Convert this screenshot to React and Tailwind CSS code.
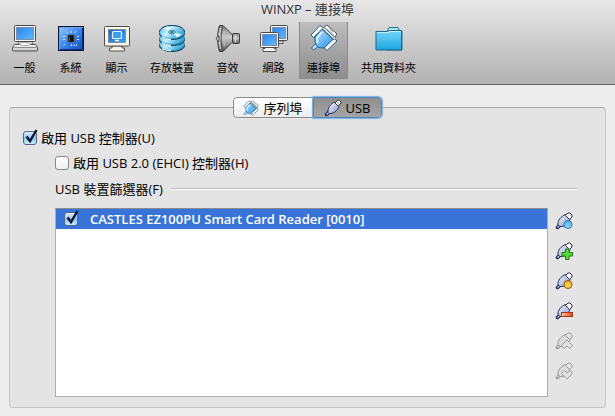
import React, { useState } from "react";

const Monitor = ({ x = 0, y = 0, w = 21, h = 17 }) => (
  <g transform={`translate(${x} ${y})`}>
    <rect x="0.5" y="0.5" width={w - 1} height={h - 1} rx="1" fill="#f4f4f0" stroke="#4c4c4c" />
    <rect x="2.5" y="2.5" width={w - 5} height={h - 5} fill="url(#screen)" stroke="#7d8fa8" />
  </g>
);

const GeneralIcon = () => (
  <svg width="28" height="28" viewBox="0 0 28 28">
    <path d="M8 17h13l1 4H7z" fill="#d8d8d4" stroke="#777" />
    <Monitor x={3} y={1} w={22} h={17} />
    <path d="M3.500 20.500h21l2 3v2.500q0 1-1 1h-23q-1 0-1-1v-2.500z" fill="url(#grayV)" stroke="#4f4f4f" />
    <ellipse cx="14" cy="20" rx="6" ry="1.500" fill="#fff" stroke="#888" strokeWidth="0.700" />
    <path d="M2.500 23.500h23" stroke="#8a8a8a" />
  </svg>
);

const SystemIcon = () => (
  <svg width="28" height="28" viewBox="0 0 28 28">
    <rect x="1.500" y="2.500" width="25" height="24" fill="#6f9fe4" stroke="#10183a" />
    <rect x="3" y="4" width="22" height="21" fill="url(#board)" />
    <path d="M3 25.500h22.500V4" fill="none" stroke="#0b2c82" />
    <rect x="11" y="11" width="6" height="7" fill="#101010" stroke="#5b5346" strokeWidth="0.700" />
    <path d="M14 7v2M9.500 7.500l1.500 1.500M19.500 7l-2 2M6 12.500h2M6 15.500h2M7 21.500l1.500-1.500M20 12.500h2M20 15.500h2" stroke="#d9e9ff" />
    <path d="M14.500 20.500v1.500M17 20.500v1.500M19.500 20.500v1.500" stroke="#fff" />
    <path d="M12.500 13v4" stroke="#565656" />
  </svg>
);

const DisplayIcon = () => (
  <svg width="28" height="28" viewBox="0 0 28 28">
    <path d="M9 22h10v2h2.500v3h-15v-3H9z" fill="#f7f4e7" stroke="#555248" />
    <rect x="1.500" y="2.500" width="25" height="19.500" rx="1" fill="#f9f6e9" stroke="#4f4d45" />
    <rect x="5.500" y="5.500" width="17" height="13" fill="url(#screenDeep)" stroke="#778" strokeWidth="0.700" />
    <rect x="9.500" y="7.500" width="9" height="7" rx="1" fill="#3c9cf4" stroke="#e8f5ff" strokeWidth="1.200" />
    <path d="M12 16.500h4" stroke="#fff" strokeWidth="1.500" />
  </svg>
);

const StorageIcon = () => (
  <svg width="28" height="28" viewBox="0 0 28 28">
    {[20, 14, 8].map((cy) => (
      <g key={cy}>
        <path d={`M1.500 ${cy}v1.500c0 8 25 8 25 0V${cy}z`} fill="#157fb3" stroke="#174357" />
        <ellipse cx="14" cy={cy} rx="12.500" ry="6.500" fill="url(#disc)" stroke="#3a8db3" strokeWidth="0.700" />
      </g>
    ))}
    <path d="M1.500 8c0-8.700 25-8.700 25 0" fill="none" stroke="#174357" />
    <path d="M14 8L5 4.500 10 2zM14 8l10 2.500-5 3z" fill="#f1fcff" opacity="0.850" />
    <ellipse cx="14" cy="8" rx="3.500" ry="1.800" fill="#8bc7df" stroke="#277295" strokeWidth="0.700" />
    <ellipse cx="14" cy="8" rx="1.500" ry="0.800" fill="#16445c" />
    <path d="M4 18.500c2 2 6 3 9 3M4 24.500c2 1.500 6 2 9 2M4 12.500c2 2 6 3 9 3" stroke="#d9f8ff" strokeWidth="1.500" fill="none" />
  </svg>
);

const AudioIcon = () => (
  <svg width="28" height="28" viewBox="0 0 28 28">
    <rect x="18.500" y="9.500" width="7" height="10" rx="1" fill="url(#metal)" stroke="#3b3b3b" />
    <path d="M5.500 1.500h3.500L18.500 11v7L9 27.500H5.500C3 21 3 8 5.500 1.500z" fill="url(#metal)" stroke="#3b3b3b" />
    <path d="M9 2C6.500 9 6.500 20 9 27" stroke="#4b4b4b" fill="none" />
    <path d="M6.500 4c-1.500 6-1.500 15 0 21" stroke="#d5d5d5" fill="none" />
    <path d="M10.500 7c-.8 5-.8 10 0 15" stroke="#c2c2c2" fill="none" />
    <path d="M5 12c-3.500.5-3.500 5 0 5.500z" fill="#d0d0d0" stroke="#444" />
    <path d="M21.500 10.500v8" stroke="#ddd" />
  </svg>
);

const NetworkIcon = () => (
  <svg width="30" height="28" viewBox="0 0 30 28">
    <path d="M15 17h9v2.500h-9z" fill="#eee" stroke="#555" />
    <Monitor x={11} y={1} w={18} h={16} />
    <path d="M6 23h9v1.500h2v3H4v-3h2z" fill="#f2f2ee" stroke="#555" />
    <Monitor x={1} y={8} w={19} h={16} />
  </svg>
);

const PortIcon = ({ size = 28 }) => (
  <svg width={size} height={size} viewBox="0 0 28 28">
    <path d="M13 4l4-3 10 9-3 4z" fill="#f7f7f7" stroke="#555" />
    <path d="M17 5l7 6M20 5l3 3" stroke="#aaa" />
    <path d="M6 19l-4.500 5 2 2L9 22z" fill="#b9e1fa" stroke="#29638f" />
    <path d="M12 5l12 11-9 8c-3 0-6 0-8-2s-2-5-2-9z" fill="url(#port)" stroke="#195b91" />
    <path d="M12 8l-5 6c0 2 0 4 1 5" stroke="#dff5ff" strokeWidth="1.800" fill="none" />
    <path d="M10 1.500L13.500 4 3.500 13.500 1 11z" fill="#f0f8fd" stroke="#345d7d" />
    <path d="M24 14.500l3 2.500-10 9.500-3-2.500z" fill="#f0f8fd" stroke="#345d7d" />
    <path d="M13 4l12 11" stroke="#345d7d" strokeWidth="3" />
    <path d="M13 4l12 11" stroke="#f4fbff" strokeWidth="1.400" />
  </svg>
);

const FolderIcon = () => (
  <svg width="28" height="28" viewBox="0 0 28 28">
    <path d="M12 8l2-4.500h9l1.500 3.500H27v19H12z" fill="#a9e4fa" stroke="#28718d" />
    <path d="M1 7.500h11.500l2-1h12V26H1z" fill="url(#folder)" stroke="#236783" />
    <path d="M2 8.500h11l2-1h10.500" fill="none" stroke="#b9f0ff" />
  </svg>
);

const UsbPlugIcon = () => (
  <svg width="18" height="18" viewBox="0 0 18 18">
    <path d="M2.500 15.500l3-3" stroke="#252d55" strokeWidth="3.500" strokeLinecap="round" />
    <path d="M2.500 15.500l3-3" stroke="#b9c8f0" strokeWidth="1.300" />
    <path d="M4 13.500C3.500 9 6.500 5 10.500 3L15 7.500C13.500 11.500 9.500 15 5 14.500z" fill="url(#plug)" stroke="#252d55" />
    <path d="M11 4l3-3h1l2 2v1l-3 3z" fill="#fff" stroke="#333" />
    <path d="M13.500 3.500l1 1" stroke="#555" />
  </svg>
);

// badge is the small mark over the plug on the filter buttons
const FilterIcon = ({ badge, muted }) => {
  const line = muted ? "#999" : "#202b50";
  return (
    <svg width="18" height="18" viewBox="0 0 18 18">
      <path d="M2.500 15.500l3-3" stroke={line} strokeWidth="3.500" strokeLinecap="round" />
      <path d="M2.500 15.500l3-3" stroke={muted ? "#ddd" : "#c6d5ff"} strokeWidth="1.300" />
      <path
        d="M3 13C2.500 8 6 4.500 10.500 2.500L15 7.500C13.500 11.500 10 15 5 14.500z"
        fill={muted ? "#dcdcdc" : "url(#plug)"}
        stroke={line}
      />
      <path d="M10.500 3.500L13 1h2L17 3v2l-2.500 2.500z" fill={muted ? "#e4e4e4" : "#fff"} stroke={line} />
      {badge === "empty" && <circle cx="13" cy="12.500" r="4" fill="url(#badgeBlue)" stroke="#2777af" />}
      {badge === "add" && (
        <path d="M10.500 7h3.500v3.500h3.500v3.500H14v3.500h-3.500V14H7v-3.500h3.500z" fill="#55dd37" stroke="#207b17" />
      )}
      {badge === "edit" && <circle cx="13" cy="12.500" r="4" fill="url(#badgeGold)" stroke="#8c5306" />}
      {badge === "remove" && (
        <rect x="6.500" y="10.500" width="11" height="4" fill="url(#badgeRed)" stroke="#a63516" />
      )}
      {badge === "up" && (
        <path d="M12 8l5.500 5.500-2.500 3-3-2.500-3 2.500-2.500-3z" fill="#e3e3e3" stroke="#999" />
      )}
      {badge === "down" && (
        <path d="M12 17l5.500-5.500-2.500-3-3 2.500-3-2.500-2.500 3z" fill="#e3e3e3" stroke="#999" />
      )}
    </svg>
  );
};

const Gradients = () => (
  <svg className="absolute h-0 w-0" aria-hidden="true">
    <defs>
      <linearGradient id="screen" x1="0" y1="0" x2="1" y2="1">
        <stop offset="0" stopColor="#2586f0" />
        <stop offset="1" stopColor="#62b9ff" />
      </linearGradient>
      <linearGradient id="screenDeep" x1="0" y1="0" x2="1" y2="1">
        <stop offset="0" stopColor="#1768c6" />
        <stop offset="1" stopColor="#38a4ff" />
      </linearGradient>
      <linearGradient id="board" x1="0" y1="0" x2="1" y2="1">
        <stop offset="0" stopColor="#8cc3fd" />
        <stop offset="0.500" stopColor="#3c87e8" />
        <stop offset="1" stopColor="#1450c0" />
      </linearGradient>
      <linearGradient id="grayV" x1="0" y1="0" x2="0" y2="1">
        <stop offset="0" stopColor="#fff" />
        <stop offset="1" stopColor="#c4c4c4" />
      </linearGradient>
      <linearGradient id="disc" x1="0" y1="0" x2="1" y2="0.400">
        <stop offset="0" stopColor="#4ab5dc" />
        <stop offset="0.450" stopColor="#c5f1ff" />
        <stop offset="1" stopColor="#3ba8d8" />
      </linearGradient>
      <linearGradient id="metal" x1="0" y1="0" x2="0" y2="1">
        <stop offset="0" stopColor="#7b7b7b" />
        <stop offset="0.450" stopColor="#cfcfcf" />
        <stop offset="1" stopColor="#555" />
      </linearGradient>
      <linearGradient id="port" x1="0" y1="0" x2="1" y2="1">
        <stop offset="0" stopColor="#b8e6ff" />
        <stop offset="1" stopColor="#258ee0" />
      </linearGradient>
      <linearGradient id="folder" x1="0" y1="0" x2="0" y2="1">
        <stop offset="0" stopColor="#77d7fb" />
        <stop offset="1" stopColor="#1ba5df" />
      </linearGradient>
      <linearGradient id="plug" x1="0" y1="0" x2="1" y2="1">
        <stop offset="0" stopColor="#fff" />
        <stop offset="1" stopColor="#8190cc" />
      </linearGradient>
      <linearGradient id="badgeBlue" x1="0" y1="0" x2="0" y2="1">
        <stop offset="0" stopColor="#48aee8" />
        <stop offset="1" stopColor="#94dcff" />
      </linearGradient>
      <linearGradient id="badgeGold" x1="0" y1="0" x2="0" y2="1">
        <stop offset="0" stopColor="#ffb22a" />
        <stop offset="1" stopColor="#ffd95a" />
      </linearGradient>
      <linearGradient id="badgeRed" x1="0" y1="0" x2="1" y2="0">
        <stop offset="0" stopColor="#ffc49b" />
        <stop offset="1" stopColor="#e44a12" />
      </linearGradient>
    </defs>
  </svg>
);

const Pages = [
  { name: "一般", icon: <GeneralIcon /> },
  { name: "系統", icon: <SystemIcon /> },
  { name: "顯示", icon: <DisplayIcon /> },
  { name: "存放裝置", icon: <StorageIcon /> },
  { name: "音效", icon: <AudioIcon /> },
  { name: "網路", icon: <NetworkIcon /> },
  { name: "連接埠", icon: <PortIcon /> },
  { name: "共用資料夾", icon: <FolderIcon /> },
];

const FilterActions = [
  { badge: "empty", label: "加入空白篩選器" },
  { badge: "add", label: "從裝置加入篩選器" },
  { badge: "edit", label: "編輯篩選器" },
  { badge: "remove", label: "移除篩選器" },
  { badge: "up", label: "上移篩選器", disabled: true },
  { badge: "down", label: "下移篩選器", disabled: true },
];

function CheckBox({ id, checked, onChange }) {
  return (
    <span className="grid shrink-0">
      <input
        id={id}
        type="checkbox"
        checked={checked}
        onChange={(e) => onChange(e.target.checked)}
        className="peer col-start-1 row-start-1 size-[14px] appearance-none rounded-[3px] border border-[#8b8b8b] bg-gradient-to-b from-white to-[#f0f0f0] checked:border-[#52658f] checked:from-[#e2effb] checked:via-[#8fc3f0] checked:to-[#c5efff]"
      />
      <svg
        className="pointer-events-none invisible col-start-1 row-start-1 size-[14px] overflow-visible peer-checked:visible"
        viewBox="0 0 14 14"
      >
        <path d="M3.500 5.500l3.500 4.500L13.500-1" fill="none" stroke="#0c1730" strokeWidth="2.400" />
      </svg>
    </span>
  );
}

function App() {
  const [page, setPage] = useState("連接埠");
  const [tab, setTab] = useState("usb");
  const [usbEnabled, setUsbEnabled] = useState(true);
  const [ehciEnabled, setEhciEnabled] = useState(false);
  const [filterActive, setFilterActive] = useState(true);

  return (
    <div className="flex min-h-screen flex-col bg-[#ededed] font-['Open_Sans','Noto_Sans_CJK_TC',sans-serif] text-[13px] leading-5 text-black">
      <Gradients />

      {/* Title and toolbar */}
      <header className="border-b border-[#626262] bg-gradient-to-b from-[#e8e8e8] to-[#b2b2b2] pb-[5px]">
        <h1 className="pb-1 text-center text-[13px] leading-[18px] text-[#333]">WINXP – 連接埠</h1>
        <nav className="flex gap-[5px] pl-1">
          {Pages.map((item) => (
            <button
              key={item.name}
              onClick={() => setPage(item.name)}
              className={
                "flex min-w-[41px] flex-col items-center px-2 pt-[2px] pb-[2px] text-[11px] whitespace-nowrap " +
                (page === item.name
                  ? "bg-gradient-to-b from-[#bdbdbd] to-[#8c8c8c] shadow-[inset_1px_0_#8b8b8b,inset_-1px_0_#8b8b8b]"
                  : "")
              }
            >
              <span className="flex w-6 justify-center *:shrink-0">{item.icon}</span>
              <span className="pt-[7px] leading-[18px]">{item.name}</span>
            </button>
          ))}
        </nav>
      </header>

      <main className="flex flex-1 flex-col px-[9px] pt-3 pb-2">
        {/* Tabs straddle the top edge of the group box */}
        <div role="tablist" className="z-10 -mb-[11px] flex h-[21px] justify-center">
          <button
            role="tab"
            aria-selected={tab === "serial"}
            onClick={() => setTab("serial")}
            className={
              "flex items-center gap-1 rounded-l border border-[#8b8b8b] px-[9px] " +
              (tab === "serial" ? "bg-[#999]" : "bg-gradient-to-b from-white to-[#ececec]")
            }
          >
            <PortIcon size={16} />
            序列埠
          </button>
          <button
            role="tab"
            aria-selected={tab === "usb"}
            onClick={() => setTab("usb")}
            className={
              "flex items-center gap-1 rounded-r border px-[10px] " +
              (tab === "usb"
                ? "border-[#4f86b8] bg-gradient-to-b from-[#8f8f8f] to-[#a5a5a5] shadow-[0_0_1px_1px_#78b2e8]"
                : "border-[#8b8b8b] bg-gradient-to-b from-white to-[#ececec]")
            }
          >
            <UsbPlugIcon />
            USB
          </button>
        </div>

        <section className="flex flex-1 flex-col rounded border border-[#c6c6c6] border-t-[#a8a8a8] bg-[#e4e4e4] pt-5 pr-7 pb-[10px] pl-[13px]">
          <div className="flex items-center gap-1">
            <CheckBox id="usb" checked={usbEnabled} onChange={setUsbEnabled} />
            <label htmlFor="usb">啟用 USB 控制器(U)</label>
          </div>

          <div className="flex flex-1 flex-col pt-[5px] pl-8">
            <div className="flex items-center gap-1">
              <CheckBox id="ehci" checked={ehciEnabled} onChange={setEhciEnabled} />
              <label htmlFor="ehci">啟用 USB 2.0 (EHCI) 控制器(H)</label>
            </div>

            <div className="flex items-center gap-2 pt-[6px]">
              <h2>USB 裝置篩選器(F)</h2>
              <div className="h-0.5 flex-1 border-t border-[#bcbcbc] bg-white" />
            </div>

            <div className="flex flex-1 gap-[7px] pt-[9px] pr-1">
              <ul className="flex-1 border border-[#adadad] border-t-[#8a8a8a] bg-white">
                <li className="flex h-5 items-center gap-3 bg-[#3874d7] pl-2 font-semibold text-white">
                  <CheckBox id="filter" checked={filterActive} onChange={setFilterActive} />
                  <label htmlFor="filter">CASTLES EZ100PU Smart Card Reader [0010]</label>
                </li>
              </ul>
              <div className="flex flex-col gap-3 pt-1">
                {FilterActions.map((action) => (
                  <button key={action.badge} aria-label={action.label} disabled={action.disabled}>
                    <FilterIcon badge={action.badge} muted={action.disabled} />
                  </button>
                ))}
              </div>
            </div>
          </div>
        </section>
      </main>
    </div>
  );
}

export default App;
